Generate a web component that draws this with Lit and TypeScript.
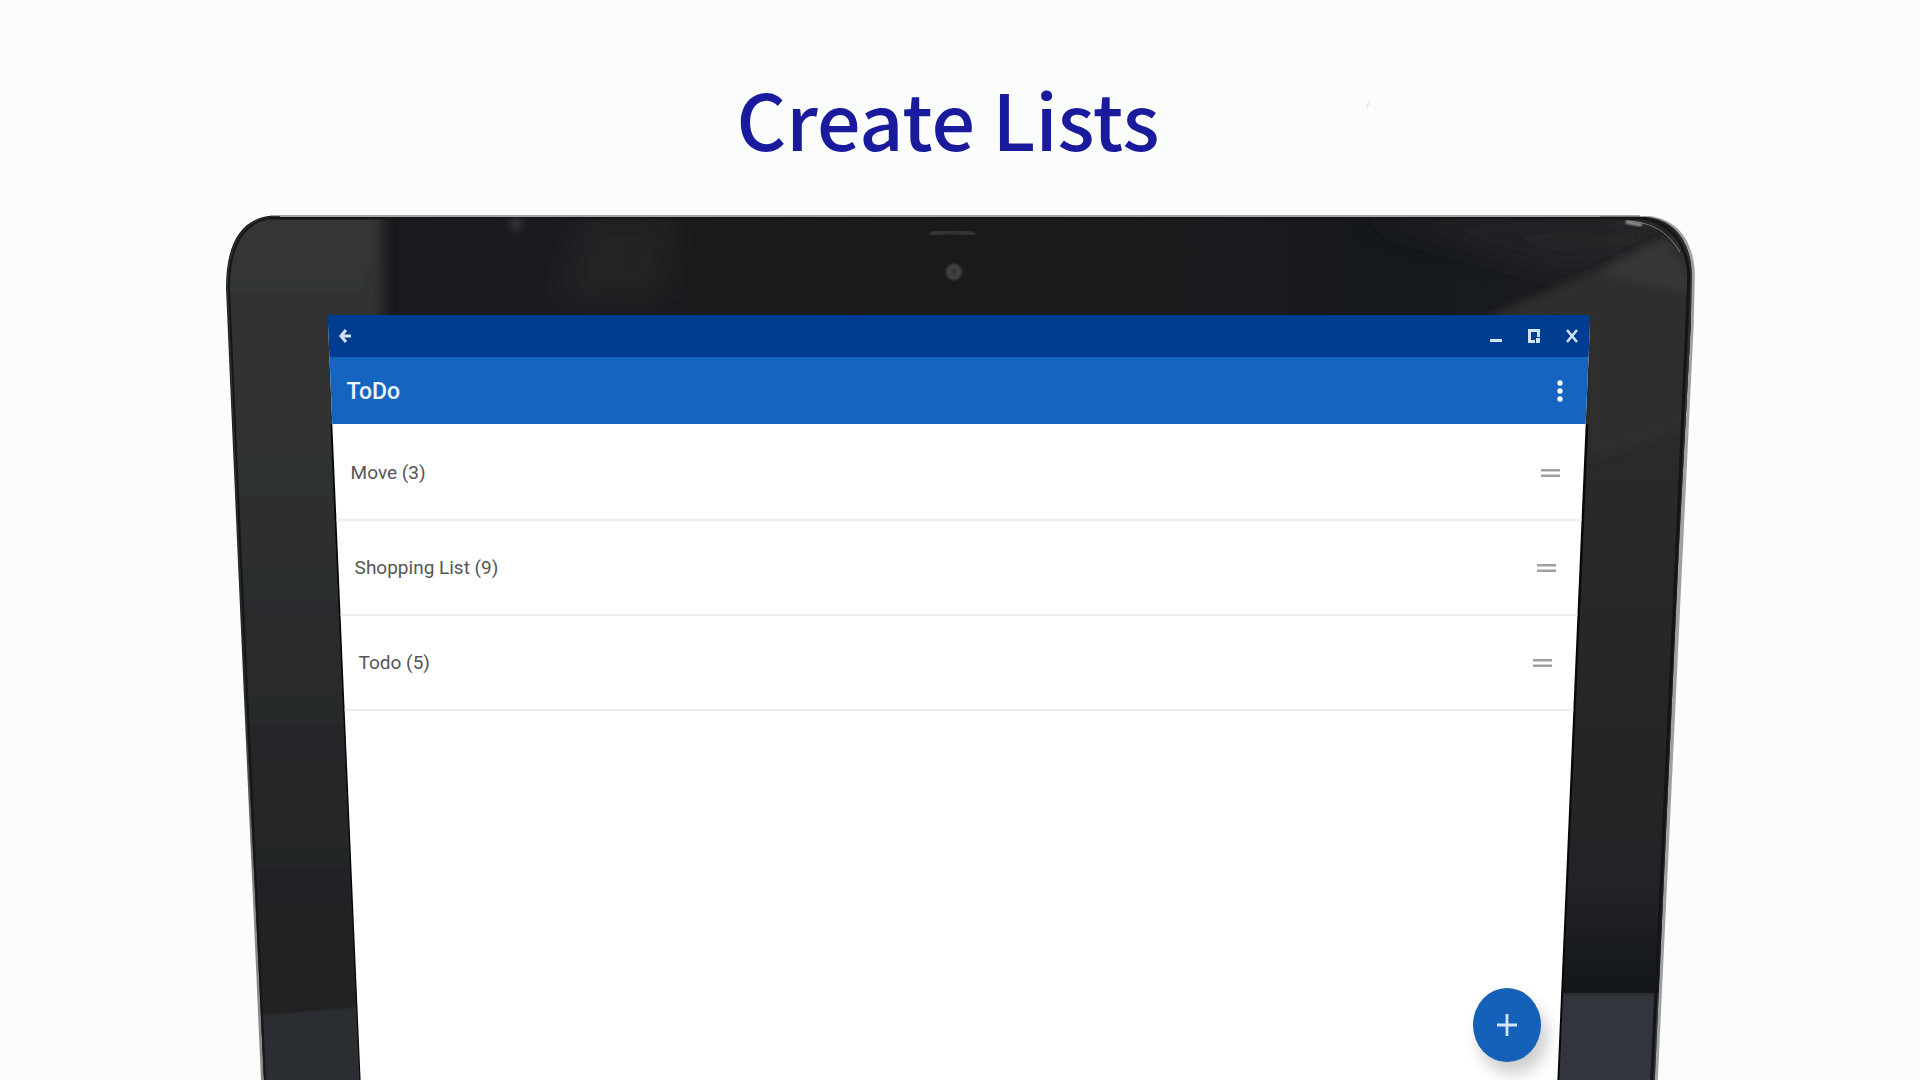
import { LitElement, html, css, svg } from "lit";
import { customElement, property } from "lit/decorators.js";

interface TodoList {
  name: string;
  count: number;
}

@customElement("tablet-frame")
class TabletFrame extends LitElement {
  static styles = css`
    :host {
      position: relative;
      display: flex;
      flex-direction: column;
    }
    .art {
      position: absolute;
      inset: 0;
      width: 100%;
      height: 100%;
      overflow: visible;
    }
    .glass {
      position: relative;
      flex: 1;
      display: flex;
      flex-direction: column;
      padding: 99px 104px 0 102px;
    }
  `;

  render() {
    return html`
      <svg class="art" viewBox="226 216 1469 864" preserveAspectRatio="none" aria-hidden="true">
        <defs>
          <clipPath id="body">
            <path d="M270 217 H1646 C1676 219 1692 244 1692 276 L1691 323 L1679 550 L1655 1080 H264 L238 540 L227 288 C227 247 240 221 270 217Z" />
          </clipPath>
          <linearGradient id="side" x1="0" y1="0" x2="0" y2="1">
            <stop offset="0" stop-color="#353535" />
            <stop offset=".35" stop-color="#2e2f2f" />
            <stop offset=".6" stop-color="#272829" />
            <stop offset=".88" stop-color="#212122" />
            <stop offset="1" stop-color="#1d1e20" />
          </linearGradient>
          <linearGradient id="rside" x1="0" y1="0" x2="0" y2="1">
            <stop offset="0" stop-color="#2c2c2c" />
            <stop offset=".5" stop-color="#262728" />
            <stop offset=".85" stop-color="#212326" />
            <stop offset="1" stop-color="#131619" />
          </linearGradient>
          <linearGradient id="top" x1="0" y1="0" x2="1" y2="0">
            <stop offset="0" stop-color="#17191c" />
            <stop offset=".18" stop-color="#1a1c20" />
            <stop offset=".4" stop-color="#1b191a" />
            <stop offset=".6" stop-color="#1a1b1d" />
            <stop offset=".85" stop-color="#15181c" />
            <stop offset="1" stop-color="#1e2022" />
          </linearGradient>
          <linearGradient id="edge" x1="0" y1="0" x2="0" y2="1">
            <stop offset="0" stop-color="#1a1a1a" />
            <stop offset=".55" stop-color="#2a2829" />
            <stop offset=".8" stop-color="#8d898a" />
            <stop offset="1" stop-color="#8d898a" />
          </linearGradient>
          <filter id="b8" x="-50%" y="-20%" width="200%" height="140%"><feGaussianBlur stdDeviation="7 2" /></filter>
          <filter id="b3" x="-50%" y="-50%" width="200%" height="200%"><feGaussianBlur stdDeviation="4" /></filter>
          <filter id="b12" x="-100%" y="-100%" width="300%" height="300%"><feGaussianBlur stdDeviation="14" /></filter>
          <filter id="b1" x="-20%" y="-50%" width="140%" height="200%"><feGaussianBlur stdDeviation="1" /></filter>
        </defs>
        <path fill="#a29fa0" d="M1600 216 H1650 C1680 220 1695 244 1695 276 L1694 323 L1683 550 L1658 1080 H1640Z" />
        <path fill="url(#edge)" d="M268 216 C238 221 226 248 226 288 L237 540 L261 1080 H280 V216Z" />
        <g clip-path="url(#body)">
          <rect x="226" y="216" width="1469" height="864" fill="#242526" />
          <rect x="360" y="216" width="1250" height="110" fill="url(#top)" />
          <path fill="#29292a" opacity=".5" filter="url(#b12)" d="M580 216 H680 L660 300 H560Z" />
          <path fill="#25282a" opacity=".7" filter="url(#b12)" d="M1360 216 H1640 L1640 260 L1560 270Z" />
          <rect x="196" y="206" width="187" height="884" fill="url(#side)" filter="url(#b8)" />
          <path fill="url(#rside)" d="M1560 300 H1710 V993 H1540Z" />
          <path fill="#2d2d2d" filter="url(#b3)" d="M1476 322 L1580 278 L1710 220 V420 L1590 460 V320Z" />
          <path fill="#3a3a3b" opacity=".7" filter="url(#b3)" d="M1595 274 L1664 238 L1700 290 L1690 294Z" />
          <path fill="#2b2d31" filter="url(#b1)" d="M250 1016 L365 1007 V1090 H250Z" />
          <path fill="#31343a" filter="url(#b1)" d="M1550 994 H1670 V1090 H1550Z" />
          <path d="M270 218 H1640 C1672 221 1689 246 1689 280 L1677 550 L1652 1080" fill="none" stroke="#141516" stroke-width="3" />
          <path d="M270 218 C242 223 229 248 229 288 L240 540 L265 1080" fill="none" stroke="#161617" stroke-width="2" />
          <path d="M1626 221 C1656 222 1670 235 1680 252" fill="none" stroke="#77777a" stroke-width="1" />
          <path d="M1626 222 L1642 225" stroke="#a09c9a" stroke-width="3" filter="url(#b1)" />
          <circle cx="516" cy="224" r="6" fill="#3a3c41" filter="url(#b3)" />
          <path d="M932 234 Q953 230 973 234" fill="none" stroke="#343437" stroke-width="5" stroke-linecap="round" filter="url(#b1)" />
        </g>
        <path d="M270 216 H1640" stroke="#4c4c4e" stroke-width="1" />
        <circle cx="954" cy="272" r="8" fill="#434243" filter="url(#b1)" />
        <circle cx="954" cy="272" r="3" fill="#333234" filter="url(#b1)" />
        <path d="M332 424 L361 1080" stroke="#050608" stroke-width="3" />
        <path d="M1587 424 L1558 1080" stroke="#08090b" stroke-width="3" />
      </svg>
      <div class="glass"><slot></slot></div>
    `;
  }
}

@customElement("todo-screen")
class TodoScreen extends LitElement {
  @property({ attribute: false }) lists: TodoList[] = [];

  static styles = css`
    :host {
      position: relative;
      flex: 1;
      display: flex;
      flex-direction: column;
      background: #fff;
      font-family: Roboto, "Liberation Sans", sans-serif;
      clip-path: polygon(0 0, 100% 0, calc(100% - 33px) 100%, 33px 100%);
    }
    button {
      display: grid;
      place-items: center;
      padding: 0;
      border: 0;
      background: none;
      cursor: pointer;
    }
    svg {
      display: block;
    }
    .window-bar {
      display: flex;
      justify-content: space-between;
      align-items: center;
      height: 42px;
      padding: 0 6px 0 5px;
      background: #003c8f;
      color: #d3e3fb;
    }
    .controls {
      display: flex;
      gap: 14px;
    }
    .window-bar button {
      width: 24px;
      height: 32px;
      color: inherit;
    }
    .app-bar {
      display: flex;
      justify-content: space-between;
      align-items: center;
      height: 67px;
      padding: 0 18px 0 19px;
      background: #1565c0;
    }
    h2 {
      margin: 0;
      color: #ecf6ff;
      font-size: 23px;
      line-height: 32px;
      padding-top: 2px;
      font-weight: 500;
    }
    .menu {
      width: 24px;
      height: 40px;
      color: #f2f9ff;
    }
    ul {
      margin: 0;
      padding: 2px 0 0;
      list-style: none;
    }
    li {
      display: flex;
      justify-content: space-between;
      align-items: center;
      box-sizing: border-box;
      height: 95px;
      border-bottom: 2px solid #ededed;
      padding: 0 calc(var(--slant) + 27px) 0 calc(var(--slant) + 23px);
    }
    a {
      color: #555;
      font-size: 19px;
      line-height: 28px;
      text-decoration: none;
    }
    .handle {
      width: 24px;
      height: 28px;
      color: #a0a0a0;
    }
    .fab {
      position: absolute;
      right: 49px;
      bottom: 18px;
      width: 68px;
      height: 74px;
      border-radius: 50%;
      background: #1560b8;
      color: #d6e6fa;
      box-shadow: 6px 12px 16px rgba(0, 0, 0, 0.2);
    }
  `;

  render() {
    return html`
      <div class="window-bar">
        <button aria-label="Back">
          <svg width="14" height="16" viewBox="0 0 14 16" fill="none" stroke="currentColor" stroke-width="3">
            <path d="M13 8H3M8 2L3 8l5 6" />
          </svg>
        </button>
        <div class="controls">
          <button aria-label="Minimize">
            <svg width="14" height="16" viewBox="0 0 14 16"><path fill="currentColor" d="M1 11h12v3H1z" /></svg>
          </button>
          <button aria-label="Resize">
            <svg width="14" height="16" viewBox="0 0 14 16">
              <path fill="currentColor" d="M1 1h12v8h-3V4H4v8h4v3H1zM9 10h4v5H9z" />
            </svg>
          </button>
          <button aria-label="Close">
            <svg width="14" height="16" viewBox="0 0 14 16" fill="none" stroke="currentColor" stroke-width="2.5">
              <path d="M2 2l10 12M12 2L2 14" />
            </svg>
          </button>
        </div>
      </div>
      <header class="app-bar">
        <h2>ToDo</h2>
        <button class="menu" aria-label="More options">
          <svg width="8" height="24" viewBox="0 0 8 24" fill="currentColor">
            ${[4, 12, 20].map((y) => svg`<circle cx="4" cy=${y} r="2.7" />`)}
          </svg>
        </button>
      </header>
      <ul>
        ${this.lists.map(
          (list, i) => html`
            <li style="--slant: ${i * 4}px">
              <a href="#">${list.name} (${list.count})</a>
              <button class="handle" aria-label="Reorder ${list.name}">
                <svg width="20" height="10" viewBox="0 0 20 10" fill="currentColor">
                  <path d="M0 1h19v2.6H0zM0 6.4h19V9H0z" />
                </svg>
              </button>
            </li>
          `
        )}
      </ul>
      <button class="fab" aria-label="Add list">
        <svg width="22" height="24" viewBox="0 0 22 24" fill="none" stroke="currentColor" stroke-width="2.8">
          <path d="M11 1v22M1 12h20" />
        </svg>
      </button>
    `;
  }
}

@customElement("app-root")
class AppRoot extends LitElement {
  static styles = css`
    :host {
      position: relative;
      display: flex;
      flex-direction: column;
      box-sizing: border-box;
      min-height: 100vh;
      background: #fbfdfd;
      overflow: hidden;
    }
    h1 {
      margin: 0;
      padding: 68px 24px 48px 0;
      color: #1a1a9c;
      font-family: "Noto Sans CJK JP", "Open Sans", sans-serif;
      font-size: 77px;
      line-height: 100px;
      font-weight: 500;
      text-align: center;
    }
    tablet-frame {
      flex: 1;
      width: 76.5%;
      margin: 0 auto;
    }
    .fleck {
      position: absolute;
      left: 71%;
      top: 99px;
    }
  `;

  private lists: TodoList[] = [
    { name: "Move", count: 3 },
    { name: "Shopping List", count: 9 },
    { name: "Todo", count: 5 },
  ];

  render() {
    return html`
      <h1>Create Lists</h1>
      <svg class="fleck" width="10" height="12" viewBox="0 0 10 12" aria-hidden="true">
        <path d="M7 1Q7 6 3 10Q3 5 7 1Z" fill="#fbdde1" />
      </svg>
      <tablet-frame>
        <todo-screen .lists=${this.lists}></todo-screen>
      </tablet-frame>
    `;
  }
}
